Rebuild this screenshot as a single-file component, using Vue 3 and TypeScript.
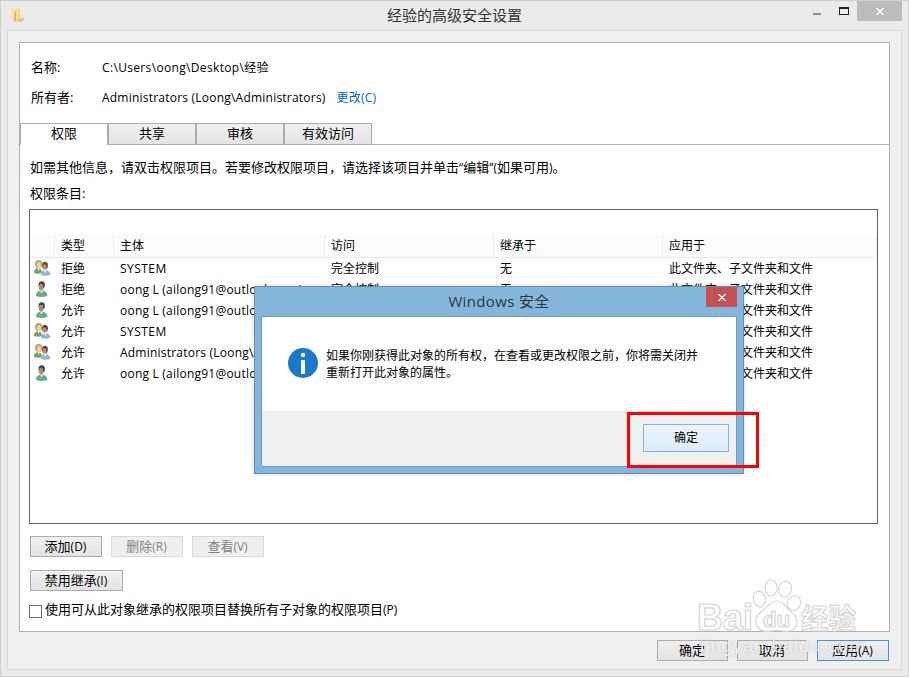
<script setup lang="ts">
interface Entry {
  kind: 'group' | 'user'
  type: string
  principal: string
  access: string
  inherited: string
  applies: string
}

interface ActionButton {
  label: string
  accessKey: string
  disabled?: boolean
}

const tabs: string[] = ['权限', '共享', '审核', '有效访问']
const columns: string[] = ['', '类型', '主体', '访问', '继承于', '应用于']
const scope = '此文件夹、子文件夹和文件'
const account = 'oong L (ailong91@outlook.com)'

const entries: Entry[] = [
  { kind: 'group', type: '拒绝', principal: 'SYSTEM', access: '完全控制', inherited: '无', applies: scope },
  { kind: 'user', type: '拒绝', principal: account, access: '完全控制', inherited: '无', applies: scope },
  { kind: 'user', type: '允许', principal: account, access: '完全控制', inherited: '无', applies: scope },
  { kind: 'group', type: '允许', principal: 'SYSTEM', access: '完全控制', inherited: '无', applies: scope },
  { kind: 'group', type: '允许', principal: 'Administrators (Loong\\Administrators)', access: '完全控制', inherited: '无', applies: scope },
  { kind: 'user', type: '允许', principal: account, access: '完全控制', inherited: '无', applies: scope },
]

const actions: ActionButton[] = [
  { label: '添加', accessKey: '(D)' },
  { label: '删除', accessKey: '(R)', disabled: true },
  { label: '查看', accessKey: '(V)', disabled: true },
]
</script>

<template>
  <div class="window">
    <header class="titlebar">
      <svg class="folder" width="15" height="16" viewBox="0 0 15 16">
        <path d="M7 13.8 L12 9.5 L13.5 11 L10 14 Z" fill="#b9bcc2" />
        <path d="M4 1.5 L8.6 0.8 L9 9 L11 11.6 L6 13.4 L4 13 Z" fill="#e8cc70" />
        <path d="M0.5 1 L4.5 0 L5.5 1 L5.5 12.6 L3.5 14 L0.5 12.5 Z" fill="#f8e59b" />
        <path d="M3.6 4 L5 3 V12.8 L3.4 14 Z" fill="#cdb070" />
        <path d="M5.6 2 L8 1.6 V10 L5.6 11.6 Z" fill="#f6e08b" />
      </svg>
      <h1>经验的高级安全设置</h1>
      <div class="controls">
        <svg width="90" height="20" viewBox="0 0 90 20" shape-rendering="crispEdges">
          <rect x="0" y="12" width="8" height="2" fill="#8c8c8c" />
          <path d="M26 6h10v8h-10z M27 8v5h8v-5z" fill="#222" fill-rule="evenodd" />
          <rect x="44" y="0" width="45" height="20" fill="#bcbcbc" />
          <path d="M63 7h2v1h1v1h2v-1h1v-1h2v1h-1v1h-1v1h-1v1h1v1h1v1h1v1h-2v-1h-1v-1h-2v1h-1v1h-2v-1h1v-1h1v-1h1v-1h-1v-1h-1v-1h-1z" fill="#fff" />
        </svg>
      </div>
    </header>

    <main class="client">
      <section class="panel">
        <div class="field first">
          <span class="label">名称:</span>
          <span class="value path">C:\Users\oong\Desktop\经验</span>
        </div>
        <div class="field">
          <span class="label">所有者:</span>
          <span class="value">Administrators (Loong\Administrators)</span>
          <a class="change">更改(C)</a>
        </div>

        <nav class="tabs">
          <div v-for="(tab, i) in tabs" :key="tab" class="tab" :class="{ active: i === 0 }">{{ tab }}</div>
          <div class="tab-rest"></div>
        </nav>

        <div class="sheet">
          <p class="hint">如需其他信息，请双击权限项目。若要修改权限项目，请选择该项目并单击<span class="q">“</span>编辑<span class="q">”(</span>如果可用<span class="q">)</span>。</p>
          <p class="caption">权限条目:</p>

          <div class="list">
            <div class="row head">
              <span v-for="column in columns" :key="column" class="cell">{{ column }}</span>
            </div>
            <div v-for="(entry, i) in entries" :key="i" class="row">
              <span class="cell icon">
                <svg v-if="entry.kind === 'group'" width="17" height="16" viewBox="0 0 17 16">
                  <path d="M0 13 Q0 8.4 4 8 Q8 8.4 8 13 Q4 14.6 0 13Z" fill="#6fa560" />
                  <path d="M3.5 8 L5.8 8 L4.8 11Z" fill="#f4f4e8" />
                  <ellipse cx="4.7" cy="3.9" rx="3.7" ry="3.9" fill="#bfa266" />
                  <ellipse cx="5" cy="5" rx="2" ry="2.9" fill="#f2d0aa" />
                  <path d="M7 15 Q7 10.3 11.2 10 Q16.4 10.3 16.4 15 Q11.500 16.6 7 15Z" fill="#8fb6e8" />
                  <path d="M9.6 10 L12.5 10 L11.4 13Z" fill="#eef5fc" />
                  <ellipse cx="11" cy="5.4" rx="2.9" ry="3.6" fill="#54473d" />
                  <ellipse cx="10.5" cy="7" rx="2" ry="2.8" fill="#c58a61" />
                </svg>
                <svg v-else width="16" height="16" viewBox="0 0 16 16">
                  <path d="M2 15 Q1.600 10.200 7.500 9.500 Q13.600 10.200 13.400 15 Q7.500 17 2 15Z" fill="#65ab8a" />
                  <path d="M5.600 9.500 L9 9.500 L7.600 12.600Z" fill="#edf5ef" />
                  <ellipse cx="7.700" cy="3.900" rx="3.200" ry="3.600" fill="#47413d" />
                  <ellipse cx="7.100" cy="6.200" rx="2.200" ry="3.400" fill="#b58a70" />
                </svg>
              </span>
              <span class="cell">{{ entry.type }}</span>
              <span class="cell principal" :class="{ caps: entry.principal === 'SYSTEM' }">{{ entry.principal }}</span>
              <span class="cell">{{ entry.access }}</span>
              <span class="cell">{{ entry.inherited }}</span>
              <span class="cell">{{ entry.applies }}</span>
            </div>
          </div>

          <div class="actions">
            <button v-for="action in actions" :key="action.label" class="btn" :disabled="action.disabled">
              {{ action.label }}<span class="key">{{ action.accessKey }}</span>
            </button>
          </div>
          <button class="btn inherit">禁用继承<span class="key">(I)</span></button>
          <label class="replace">
            <span class="checkbox"></span>
            <span>使用可从此对象继承的权限项目替换所有子对象的权限项目<span class="key">(P)</span></span>
          </label>
        </div>
      </section>

      <footer class="footer">
        <button class="btn">确定</button>
        <button class="btn">取消</button>
        <button class="btn default">应用<span class="key">(A)</span></button>
      </footer>
    </main>

    <div class="dialog">
      <div class="dialog-title">
        Windows 安全
        <svg class="dialog-close" width="31" height="20" viewBox="0 0 31 20" shape-rendering="crispEdges">
          <rect width="31" height="20" fill="#c75050" />
          <path d="M12 7h2v1h1v1h2v-1h1v-1h2v1h-1v1h-1v1h-1v1h1v1h1v1h1v1h-2v-1h-1v-1h-2v1h-1v1h-2v-1h1v-1h1v-1h1v-1h-1v-1h-1v-1h-1z" fill="#fff" />
        </svg>
      </div>
      <div class="dialog-client">
        <div class="message">
          <svg width="30" height="30" viewBox="0 0 30 30">
            <circle cx="15" cy="15" r="15" fill="#1979ca" />
            <circle cx="15" cy="7" r="2.2" fill="#fff" />
            <rect x="13" y="12" width="4" height="14" fill="#fff" />
          </svg>
          <p>如果你刚获得此对象的所有权，在查看或更改权限之前，你将需关闭并<br />重新打开此对象的属性。</p>
        </div>
        <div class="dialog-footer">
          <button class="confirm">确定</button>
        </div>
      </div>
    </div>

    <div class="highlight"></div>

    <svg class="watermark" width="170" height="84" viewBox="0 0 170 84">
      <g fill="#fff" fill-opacity="0.75" stroke="#d6d6d6" stroke-width="1.2">
        <ellipse cx="68.500" cy="43" rx="6" ry="8" transform="rotate(-10 68.500 43)" />
        <ellipse cx="80" cy="32" rx="6" ry="8" />
        <ellipse cx="94" cy="33" rx="6.500" ry="8" transform="rotate(10 94 33)" />
        <ellipse cx="103" cy="47" rx="6.500" ry="7.500" transform="rotate(20 103 47)" />
        <path d="M86 45 C79 45 77 51 71 55 C66 59 64 63 65 67 C67 75 73 76 79 75 C84 74 88 74 93 75 C100 76 105 73 106 67 C107 61 102 58 98 54 C94 50 92 45 86 45Z" />
        <text class="wm-latin" x="6" y="74" font-size="36" textLength="56" lengthAdjust="spacingAndGlyphs">Bai</text>
        <text class="wm-latin" x="72" y="71" font-size="22" textLength="27" lengthAdjust="spacingAndGlyphs">du</text>
        <text class="wm-cjk" x="110" y="73" font-size="28" textLength="55" lengthAdjust="spacingAndGlyphs">经验</text>
      </g>
    </svg>
    <div class="wm-url">jingyan.baidu.com</div>
  </div>
</template>

<style>
body {
  margin: 0;
  overflow: hidden;
}
</style>

<style scoped>
* {
  box-sizing: border-box;
}
.window {
  position: relative;
  width: 909px;
  height: 677px;
  padding: 0 6px 6px;
  border: 1px solid #d0d0d0;
  background: #ebebeb;
  color: #000;
  font: 13px/20px 'Open Sans', 'Noto Sans CJK SC', sans-serif;
  white-space: nowrap;
  overflow: hidden;
}
.titlebar {
  display: grid;
  grid-template-columns: 90px 1fr 90px;
  height: 29px;
}
.folder {
  margin: 7px 0 0 4px;
}
h1 {
  margin: 0;
  color: #333;
  font-size: 15px;
  font-weight: 400;
  line-height: 28px;
  text-align: center;
}
.controls {
  display: flex;
  justify-content: flex-end;
}
.controls svg {
  flex: none;
  margin-right: -1px;
}
.client {
  height: 640px;
  padding: 11px;
  border: 1px solid #d9d9d9;
  background: #f0f0f0;
}
.panel {
  width: 871px;
  height: 590px;
  border: 1px solid #b0b0b0;
  background: #fff;
}
.field {
  display: flex;
  height: 30px;
  padding-left: 11px;
  line-height: 30px;
}
.field.first {
  margin-top: 10px;
}
.label {
  width: 71px;
  line-height: 29px;
}
.value {
  font-size: 12px;
  letter-spacing: 0.22px;
}
.path {
  letter-spacing: 0.34px;
}
.change {
  margin-left: 11px;
  color: #0066cc;
  font-size: 12px;
  letter-spacing: 0.2px;
}
.tabs {
  display: flex;
  height: 22px;
  margin-top: 10px;
}
.tab {
  width: 88px;
  border: 1px solid #acacac;
  background: linear-gradient(#f0f0f0, #e3e3e3);
  line-height: 18px;
  text-align: center;
}
.tab.active {
  border-bottom: 0;
  background: #fff;
}
.tab-rest {
  flex: 1;
  border-bottom: 1px solid #b0b0b0;
}
.sheet {
  padding: 13px 11px 0 9px;
}
p {
  margin: 0;
}
.hint,
.caption {
  height: 20px;
  padding-left: 1px;
  line-height: 19px;
}
.caption {
  margin-top: 6px;
}
.q {
  font-size: 12px;
}
.list {
  width: 849px;
  height: 315px;
  margin-top: 5px;
  padding-top: 24px;
  border: 1px solid #646464;
  font-size: 12px;
}
.row {
  display: grid;
  grid-template-columns: 25px 59px 211px 169px 169px 1fr;
  height: 21px;
  line-height: 21px;
}
.cell {
  padding-left: 6px;
}
.principal {
  letter-spacing: 0.22px;
}
.caps {
  letter-spacing: 0.45px;
}
.head {
  height: 24px;
  border-bottom: 1px solid #e3ecf8;
  background: #fcfcfc;
  line-height: 23px;
}
.head .cell {
  border-right: 1px solid #e3ecf8;
}
.icon {
  padding: 2px 0 0 4px;
}
.icon svg {
  display: block;
}
.actions {
  display: flex;
  gap: 9px;
  margin: 12px 0 13px 1px;
}
.btn {
  width: 72px;
  height: 21px;
  padding: 0 1px 1px 0;
  border: 1px solid #acacac;
  background: linear-gradient(#f0f0f0, #e3e3e3);
  color: #000;
  font: inherit;
  line-height: 18px;
}
.key {
  font-size: 12px;
}
.btn:disabled {
  border-color: #d9d9d9;
  background: #efefef;
  color: #838383;
}
.inherit {
  display: block;
  width: 93px;
  margin-left: 1px;
}
.replace {
  display: flex;
  gap: 3px;
  margin-top: 9px;
  line-height: 19px;
}
.checkbox {
  width: 13px;
  height: 13px;
  margin-top: 5px;
  border: 1px solid #707070;
  background: #fff;
}
.footer {
  display: flex;
  justify-content: flex-end;
  gap: 9px;
  margin: 8px 1px 0 0;
}
.footer .btn {
  width: 71px;
}
.footer .default {
  width: 72px;
  border-color: #3399ff;
}
.dialog {
  position: absolute;
  left: 253px;
  top: 285px;
  width: 490px;
  height: 188px;
  padding: 0 6px;
  border: 1px solid #6490b0;
  background: #84b6dc;
  box-shadow: 0 0 4px rgba(0, 0, 0, 0.18);
}
.dialog-title {
  position: relative;
  height: 29px;
  color: #2b3640;
  font-size: 15px;
  letter-spacing: 0.35px;
  line-height: 29px;
  text-align: center;
}
.dialog-close {
  position: absolute;
  top: 0;
  right: 0;
}
.dialog-client {
  height: 151px;
  border: 1px solid #6c9dc1;
  background: #fff;
}
.message {
  display: flex;
  height: 94px;
  gap: 8px;
  padding: 31px 0 0 26px;
  font-size: 12px;
  line-height: 17px;
}
.message p {
  margin-top: -1px;
}
.dialog-footer {
  display: flex;
  justify-content: flex-end;
  height: 55px;
  padding: 13px 7px 0 0;
  background: #f0f0f0;
}
.confirm {
  width: 86px;
  height: 28px;
  padding: 0;
  border: 1px solid #7eb4ea;
  background: linear-gradient(#ecf4fc, #dcecfc);
  color: #000;
  font: inherit;
  font-size: 12px;
}
.highlight {
  position: absolute;
  left: 626px;
  top: 411px;
  width: 132px;
  height: 56px;
  border: 3px solid #f00;
}
.watermark {
  position: absolute;
  left: 690px;
  top: 555px;
}
.wm-latin {
  font-family: 'Liberation Sans', sans-serif;
  font-weight: 700;
}
.wm-cjk {
  font-family: 'Noto Sans CJK SC', sans-serif;
  font-weight: 700;
}
.wm-url {
  position: absolute;
  left: 699px;
  top: 633px;
  color: rgba(255, 255, 255, 0.85);
  font: 18px/24px 'Liberation Sans', sans-serif;
  letter-spacing: 1.2px;
  text-shadow: 0 0 2px rgba(90, 90, 90, 0.45);
}
</style>
